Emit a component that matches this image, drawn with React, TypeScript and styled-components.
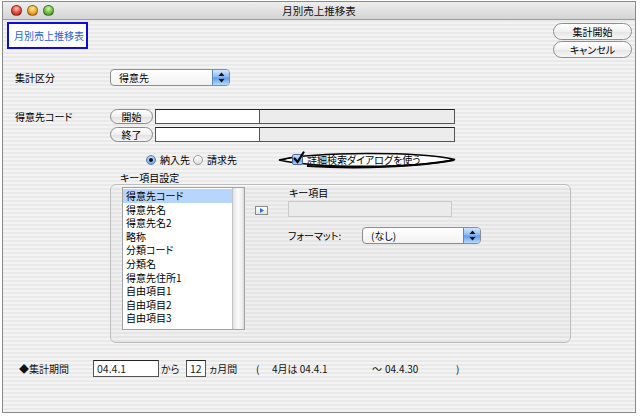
import styled, { createGlobalStyle, css } from 'styled-components'

const GlobalStyle = createGlobalStyle`
  html, body { margin: 0; padding: 0; background: #fff; }
  body {
    font-family: "Noto Sans CJK JP", "Liberation Sans", sans-serif;
    font-size: 10px;
    color: #000;
    font-feature-settings: "palt";
  }
`

const stripes = css`
  background: repeating-linear-gradient(to bottom, #f3f3f3 0px, #f3f3f3 2px, #e9e9e9 2px, #e9e9e9 4px);
`

const listItems = ['得意先コード', '得意先名', '得意先名2', '略称', '分類コード', '分類名', '得意先住所1', '自由項目1', '自由項目2', '自由項目3']

const Window = styled.div`
  margin: 1px 0 0 2px;
  width: 634px;
  height: 412px;
  box-sizing: border-box;
  border: 1px solid #8a8a8a;
  display: flex;
  flex-direction: column;
  ${stripes}
`

const TitleBar = styled.div`
  height: 17px;
  flex: none;
  border-bottom: 1px solid #9c9c9c;
  background: linear-gradient(to bottom, #eeeeee, #d4d4d4);
  display: grid;
  grid-template-columns: 1fr auto 1fr;
  align-items: center;
`

const Lights = styled.div`
  display: flex;
  gap: 5px;
  padding-left: 8px;
`

const lightColors = {
  red: ['#ffc0b6', '#e2483c', '#9e2016'],
  yellow: ['#ffe7a6', '#f1a826', '#b06d0a'],
  green: ['#d4f5b0', '#6cbd40', '#36801a'],
}

const Light = styled.span<{ $c: keyof typeof lightColors }>`
  width: 11px;
  height: 11px;
  border-radius: 50%;
  box-sizing: border-box;
  border: 1px solid rgba(0, 0, 0, 0.35);
  background: ${(p) => `radial-gradient(circle at 50% 30%, ${lightColors[p.$c][0]} 0%, ${lightColors[p.$c][1]} 55%, ${lightColors[p.$c][2]} 100%)`};
`

const WindowTitle = styled.div`
  font-size: 10.5px;
  color: #111;
`

const Body = styled.div`
  flex: 1;
  display: flex;
  flex-direction: column;
  padding: 2px 3px 0 4px;
`

const TopRow = styled.div`
  display: flex;
  justify-content: space-between;
  align-items: flex-start;
`

const TitleBadge = styled.div`
  width: 81px;
  height: 27px;
  box-sizing: border-box;
  border: 2px solid #0b0bdc;
  background: #fff;
  color: #1f5fd8;
  font-size: 10px;
  display: flex;
  align-items: center;
  padding-left: 5px;
`

const ButtonStack = styled.div`
  display: flex;
  flex-direction: column;
  gap: 1px;
  margin-top: 1px;
`

const PushButton = styled.div`
  width: 79px;
  height: 17px;
  box-sizing: border-box;
  border: 1px solid #8e8e8e;
  border-radius: 9px;
  background: linear-gradient(to bottom, #ffffff 0%, #f1f1f1 50%, #e4e4e4 51%, #f7f7f7 100%);
  display: flex;
  align-items: center;
  justify-content: center;
  font-size: 10px;
`

const FormRow = styled.div<{ $mt: number }>`
  display: flex;
  align-items: flex-start;
  margin-top: ${(p) => p.$mt}px;
  padding-left: 8px;
`

const Label = styled.div<{ $w: number; $pt?: number }>`
  width: ${(p) => p.$w}px;
  flex: none;
  padding-top: ${(p) => p.$pt ?? 0}px;
  line-height: 15px;
`

const Popup = styled.div<{ $w: number }>`
  width: ${(p) => p.$w}px;
  height: 17px;
  box-sizing: border-box;
  border: 1px solid #8c8c8c;
  border-radius: 4px;
  background: linear-gradient(to bottom, #ffffff, #f2f2f2);
  display: flex;
  align-items: center;
  padding-left: 8px;
  overflow: hidden;
`

const PopupArrows = styled.div`
  margin-left: auto;
  width: 17px;
  height: 100%;
  box-sizing: border-box;
  border-left: 1px solid #5b87c2;
  background: linear-gradient(to bottom, #d3e6fc 0%, #86b8f0 49%, #5b9be8 51%, #b5dafc 100%);
  display: flex;
  align-items: center;
  justify-content: center;
`

const CodeColumn = styled.div`
  display: flex;
  flex-direction: column;
  gap: 3px;
`

const CodeLine = styled.div`
  display: flex;
  align-items: center;
`

const SmallButton = styled.div`
  width: 43px;
  height: 15px;
  box-sizing: border-box;
  border: 1px solid #8a8a8a;
  border-radius: 8px;
  background: linear-gradient(to bottom, #ffffff 0%, #efefef 50%, #e0e0e0 51%, #f4f4f4 100%);
  display: flex;
  align-items: center;
  justify-content: center;
  margin-right: 2px;
`

const TextField = styled.div<{ $w: number; $gray?: boolean; $h?: number }>`
  width: ${(p) => p.$w}px;
  height: ${(p) => p.$h ?? 15}px;
  box-sizing: border-box;
  border: 1px solid #555;
  border-top-color: #222;
  background: ${(p) => (p.$gray ? '#ececec' : '#fff')};
  display: flex;
  align-items: center;
  padding-left: 3px;
  font-size: 10.5px;
  color: #222;
`

const OptionsRow = styled.div`
  display: flex;
  align-items: center;
  margin-top: 9px;
  padding-left: 139px;
  height: 17px;
`

const RadioItem = styled.div`
  display: flex;
  align-items: center;
  gap: 4px;
  margin-right: 3px;
`

const Radio = styled.span<{ $on?: boolean }>`
  width: 10px;
  height: 10px;
  border-radius: 50%;
  box-sizing: border-box;
  border: 1px solid ${(p) => (p.$on ? '#5e7ea8' : '#9a9a9a')};
  background: ${(p) => (p.$on ? 'radial-gradient(circle at 50% 35%, #e2eefd 0%, #76aaee 70%, #4d86d6 100%)' : 'linear-gradient(to bottom, #ffffff, #dcdcdc)')};
  display: flex;
  align-items: center;
  justify-content: center;
  &::after {
    content: '';
    width: 4px;
    height: 4px;
    border-radius: 50%;
    background: #111;
    display: ${(p) => (p.$on ? 'block' : 'none')};
  }
`

const Highlight = styled.div`
  position: relative;
  margin-left: 37px;
  width: 180px;
  height: 18px;
  display: flex;
  align-items: center;
  padding-left: 15px;
  box-sizing: border-box;
  gap: 4px;
`

const HighlightRing = styled.svg`
  position: absolute;
  left: 0;
  top: 0;
  z-index: 0;
`

const Checkbox = styled.span`
  position: relative;
  z-index: 1;
  width: 11px;
  height: 11px;
  box-sizing: border-box;
  border: 1px solid #4a6c9a;
  border-radius: 2px;
  background: linear-gradient(to bottom, #d0e4fc 0%, #84b6f0 50%, #5b9ae6 51%, #acd4fb 100%);
`

const CheckMark = styled.svg`
  position: absolute;
  left: -1px;
  top: -4px;
`

const CheckText = styled.span`
  position: relative;
  z-index: 1;
`

const SectionLabel = styled.div`
  margin-top: 3px;
  padding-left: 113px;
  line-height: 13px;
`

const GroupBox = styled.div`
  margin-left: 103px;
  width: 461px;
  height: 159px;
  box-sizing: border-box;
  border: 1px solid #bdbdbd;
  border-radius: 6px;
  box-shadow: inset 0 1px 0 rgba(255, 255, 255, 0.7);
  background: rgba(0, 0, 0, 0.015);
  display: flex;
  padding: 2px 0 0 11px;
`

const ListBox = styled.div`
  width: 123px;
  height: 143px;
  box-sizing: border-box;
  border: 1px solid #a2a2a2;
  background: #fff;
  display: flex;
`

const ListItems = styled.div`
  flex: 1;
  padding-top: 1px;
`

const ListItem = styled.div<{ $sel?: boolean }>`
  height: 13.6px;
  line-height: 13.6px;
  padding-left: 3px;
  background: ${(p) => (p.$sel ? '#b7d6fd' : 'transparent')};
  white-space: nowrap;
`

const ScrollTrack = styled.div`
  width: 11px;
  border-left: 1px solid #c4c4c4;
  background: linear-gradient(to right, #e2e2e2 0%, #fbfbfb 45%, #f0f0f0 80%, #dadada 100%);
`

const RightPane = styled.div`
  display: flex;
  margin-left: 10px;
`

const ArrowButton = styled.div`
  margin-top: 19px;
  width: 13px;
  height: 9px;
  box-sizing: border-box;
  border: 1px solid #8a8a8a;
  background: linear-gradient(to bottom, #ffffff, #e2e2e2);
  display: flex;
  align-items: center;
  justify-content: center;
`

const KeyColumn = styled.div`
  margin-left: 20px;
  display: flex;
  flex-direction: column;
`

const KeyLabel = styled.div`
  line-height: 12px;
  padding-left: 1px;
`

const DisabledField = styled.div`
  margin-top: 2px;
  width: 164px;
  height: 16px;
  box-sizing: border-box;
  border: 1px solid #cacaca;
  background: #ebebeb;
`

const FormatRow = styled.div`
  display: flex;
  align-items: center;
  margin-top: 10px;
`

const PeriodRow = styled.div`
  display: flex;
  align-items: center;
  margin-top: 17px;
  padding-left: 12px;
`

const Piece = styled.span<{ $w: number; $pl?: number }>`
  width: ${(p) => p.$w}px;
  flex: none;
  box-sizing: border-box;
  padding-left: ${(p) => p.$pl ?? 0}px;
  white-space: nowrap;
  color: #111;
`

const UpDown = () => (
  <svg width="7" height="11" viewBox="0 0 7 11">
    <path d="M3.5 0.5 L6.5 4 L0.5 4 Z" fill="#111" />
    <path d="M3.5 10.5 L6.5 7 L0.5 7 Z" fill="#111" />
  </svg>
)

const App = () => {
  return (
    <>
      <GlobalStyle />
      <Window>
        <TitleBar>
          <Lights>
            <Light $c="red" />
            <Light $c="yellow" />
            <Light $c="green" />
          </Lights>
          <WindowTitle>月別売上推移表</WindowTitle>
          <span />
        </TitleBar>
        <Body>
          <TopRow>
            <TitleBadge>月別売上推移表</TitleBadge>
            <ButtonStack>
              <PushButton>集計開始</PushButton>
              <PushButton>キャンセル</PushButton>
            </ButtonStack>
          </TopRow>

          <FormRow $mt={11}>
            <Label $w={95} $pt={1}>集計区分</Label>
            <Popup $w={120}>
              得意先
              <PopupArrows><UpDown /></PopupArrows>
            </Popup>
          </FormRow>

          <FormRow $mt={23}>
            <Label $w={95}>得意先コード</Label>
            <CodeColumn>
              <CodeLine>
                <SmallButton>開始</SmallButton>
                <TextField $w={105} />
                <TextField $w={196} $gray style={{ marginLeft: -1 }} />
              </CodeLine>
              <CodeLine>
                <SmallButton>終了</SmallButton>
                <TextField $w={105} />
                <TextField $w={196} $gray style={{ marginLeft: -1 }} />
              </CodeLine>
            </CodeColumn>
          </FormRow>

          <OptionsRow>
            <RadioItem>
              <Radio $on />
              <span>納入先</span>
            </RadioItem>
            <RadioItem>
              <Radio />
              <span>請求先</span>
            </RadioItem>
            <Highlight>
              <HighlightRing width="180" height="18" viewBox="0 0 180 18">
                <path d="M2 9 C 40 0.5, 140 0.5, 178 8.5 C 140 17.5, 40 17.5, 2 9 Z" fill="#ffffff" stroke="#000" strokeWidth="1.4" />
                <path d="M30 15 C 80 18, 140 16, 177 9" fill="none" stroke="#000" strokeWidth="2.2" />
                <path d="M6 9 C 12 6.5, 16 6, 20 5.5" fill="none" stroke="#000" strokeWidth="1" />
              </HighlightRing>
              <Checkbox>
                <CheckMark width="13" height="13" viewBox="0 0 13 13">
                  <path d="M2.5 7.5 L5.5 11 L11.5 1.5" fill="none" stroke="#000" strokeWidth="2.2" strokeLinecap="round" />
                </CheckMark>
              </Checkbox>
              <CheckText>詳細検索ダイアログを使う</CheckText>
            </Highlight>
          </OptionsRow>

          <SectionLabel>キー項目設定</SectionLabel>

          <GroupBox>
            <ListBox>
              <ListItems>
                {listItems.map((item, i) => (
                  <ListItem key={item} $sel={i === 0}>{item}</ListItem>
                ))}
              </ListItems>
              <ScrollTrack />
            </ListBox>
            <RightPane>
              <ArrowButton>
                <svg width="4" height="5" viewBox="0 0 4 5">
                  <path d="M0 0 L4 2.5 L0 5 Z" fill="#2a6fe0" />
                </svg>
              </ArrowButton>
              <KeyColumn>
                <KeyLabel>キー項目</KeyLabel>
                <DisabledField />
                <FormatRow>
                  <Label $w={74}>フォーマット:</Label>
                  <Popup $w={119}>
                    (なし)
                    <PopupArrows><UpDown /></PopupArrows>
                  </Popup>
                </FormatRow>
              </KeyColumn>
            </RightPane>
          </GroupBox>

          <PeriodRow>
            <Piece $w={74}>◆集計期間</Piece>
            <TextField $w={66} $h={17}>04.4.1</TextField>
            <Piece $w={27} $pl={2}>から</Piece>
            <TextField $w={20} $h={17}>12</TextField>
            <Piece $w={50} $pl={3}>ヵ月間</Piece>
            <Piece $w={16}>(</Piece>
            <Piece $w={100}>4月は 04.4.1</Piece>
            <Piece $w={13}>〜</Piece>
            <Piece $w={71}>04.4.30</Piece>
            <Piece $w={10}>)</Piece>
          </PeriodRow>
        </Body>
      </Window>
    </>
  )
}

export default App
